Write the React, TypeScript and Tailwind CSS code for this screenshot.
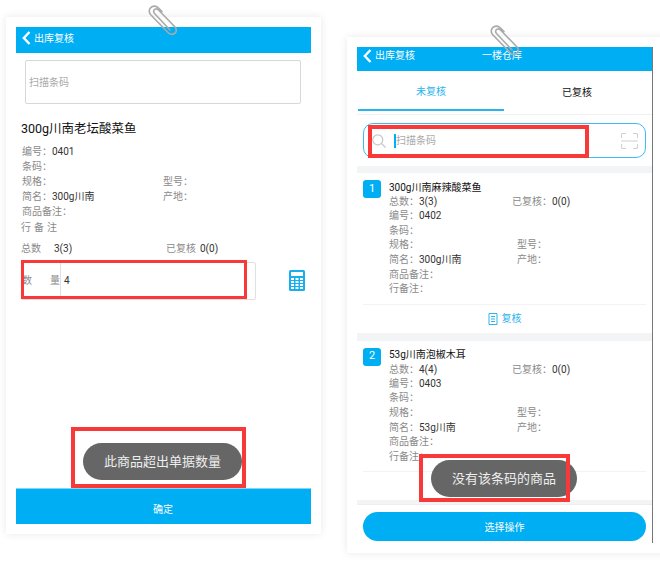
import React from "react";

const font = { fontFamily: '"Roboto","Noto Sans CJK SC",sans-serif' };

function Clip({ className }: { className: string }) {
  return (
    <svg className={`absolute ${className}`} width="30" height="30" viewBox="0 0 30 30" fill="none" stroke="#aaaaaa" strokeWidth="1.600" strokeLinecap="round">
      <path d="M22 25 L6.500 8.500 C5 7 5.500 4.500 7.500 4 C9 3.500 10 4.500 11 5.500 L27 22 C29 24.500 28.500 27 26.500 28.500 C24 30 21.500 29 20 27.500 L2.500 9.500 C0.500 7 1 3.500 3.500 2 C6 .500 8.500 1 10.500 3 L14 6.500" />
    </svg>
  );
}

function Chevron() {
  return (
    <svg width="9" height="14" viewBox="0 0 9 14" fill="none" stroke="white" strokeWidth="2.4">
      <path d="M7.500 1 L1.800 7 L7.500 13" />
    </svg>
  );
}

function Calculator() {
  return (
    <svg width="16" height="21" viewBox="0 0 16 21">
      <rect width="16" height="21" rx="1.500" fill="#19aef0" />
      <rect x="2" y="2" width="12" height="4" fill="white" />
      {[8, 11, 14, 17].map((y) =>
        [2, 6.500, 11].map((x) => <rect key={`${x}-${y}`} x={x} y={y} width="3" height="2" fill="white" />)
      )}
    </svg>
  );
}

function Row({ items, wide }: { items: [string, string?][]; wide?: boolean }) {
  return (
    <div className={`flex items-center text-[10px] leading-none ${wide ? "h-[14.800px]" : "h-[14.600px]"}`}>
      {items.map(([k, v], i) => (
        <div key={k} className={i === 0 ? (wide ? "w-[141px] shrink-0" : "w-[128px] shrink-0") : ""}>
          <span className="text-[#8a8a8a]">{k}</span>
          {v ? <span className="text-[#333]">{v}</span> : null}
        </div>
      ))}
    </div>
  );
}

function Item({ n, name, total, code, short }: { n: string; name: string; total: string; code: string; short: string }) {
  return (
    <div className="bg-white">
      <div className="flex px-[6px] pt-[7px]">
        <div className="flex h-[18px] w-[18px] shrink-0 items-center justify-center rounded-[3px] bg-[#00aef3] text-[11px] text-white">{n}</div>
        <div className="ml-2 flex-1">
          <div className="flex h-[15px] items-center text-[10px] leading-none text-[#111]">{name}</div>
          <div className="flex h-[14px] items-center text-[10px] leading-none">
            <div className="w-[123px] shrink-0">
              <span className="text-[#8a8a8a]">总数：</span>
              <span className="text-[#333]">{total}</span>
            </div>
            <span className="text-[#8a8a8a]">已复核：</span>
            <span className="text-[#333]">0(0)</span>
          </div>
          <Row items={[["编号：", code]]} />
          <Row items={[["条码："]]} />
          <Row items={[["规格："], ["型号："]]} />
          <Row items={[["简名：", short], ["产地："]]} />
          <Row items={[["商品备注："]]} />
          <Row items={[["行备注："]]} />
        </div>
      </div>
      <div className="mx-[6px] mt-[7px] flex h-[29px] items-center justify-center gap-1 border-t border-[#f3f3f3] text-[10px] text-[#2bb3ee]">
        <svg width="10" height="12" viewBox="0 0 10 12" fill="none" stroke="#2bb3ee">
          <path d="M1 .500 H9 V11.500 H1 Z M3 3.500 H7 M3 6 H7 M3 8.500 H7" />
        </svg>
        <span>复核</span>
      </div>
    </div>
  );
}

export default function App() {
  return (
    <div className="relative h-[567px] w-[660px] overflow-hidden bg-white" style={font}>
      <div className="flex items-start">
        {/* left phone */}
        <div className="ml-[6px] mt-[17px] w-[315px] shrink-0 bg-white px-[10px] pb-[10px] pt-[10px] shadow-[0_0_8px_rgba(0,0,0,0.09)]">
          <div className="flex h-[26px] items-center gap-[3px] bg-[#00aef3] pb-[4px] pl-[6px] text-[10px] text-white">
            <Chevron />
            <span>出库复核</span>
          </div>
          <div className="mx-[9px] mt-[7px] flex h-[44px] w-[276px] items-center rounded-[2px] border border-[#d8d8d8] pl-[3px] text-[10px] text-[#aaa]">扫描条码</div>
          <div className="ml-[5px] mt-[16px] text-[12.500px] leading-[18px] text-[#111]">300g川南老坛酸菜鱼</div>
          <div className="ml-[6px] mt-[7px]">
            <Row wide items={[["编号：", "0401"]]} />
            <Row wide items={[["条码："]]} />
            <Row wide items={[["规格："], ["型号："]]} />
            <Row wide items={[["简名：", "300g川南"], ["产地："]]} />
            <Row wide items={[["商品备注："]]} />
          </div>
          <div className="ml-[5px] mt-[1px] flex h-[16px] items-center text-[10px] tracking-[3px] text-[#8a8a8a]">行备注</div>
          <div className="ml-[5px] mt-[5px] flex h-[16px] items-center text-[10px] leading-none">
            <div className="flex w-[145px] shrink-0">
              <span className="w-[33px] text-[#8a8a8a]">总数</span>
              <span className="text-[#333]">3(3)</span>
            </div>
            <span className="text-[#8a8a8a]">已复核</span>
            <span className="ml-1 text-[#333]">0(0)</span>
          </div>
          <div className="ml-[5px] mt-[5px] flex items-center">
            <div className="flex h-[38px] w-[235px] items-center rounded-[2px] border border-[#e0e0e0] text-[10px]">
              <div className="flex h-full w-[39px] items-center justify-between border-r border-[#e0e0e0] text-[#8a8a8a]">
                <span>数</span>
                <span>量</span>
              </div>
              <span className="ml-[3px] text-[#333]">4</span>
            </div>
            <div className="ml-[33px]">
              <Calculator />
            </div>
          </div>
          <div className="mt-[188px] flex h-[36px] items-center justify-center border-t border-[#7fd6f9] bg-[#00aef3] pr-[1px] pt-[6px] text-[10px] text-white">确定</div>
        </div>

        {/* right phone */}
        <div className="ml-[26px] mt-[37px] w-[330px] shrink-0 bg-white pb-[10px] pl-[10px] pt-[10px] shadow-[0_0_8px_rgba(0,0,0,0.09)]">
          <div className="w-[296px] border-r border-[#777]">
            <div className="flex h-[24px] items-start gap-[3px] bg-[#00aef3] pl-[6px] pt-[2px] text-[10px] leading-[14px] text-white">
              <Chevron />
              <span>出库复核</span>
              <span className="ml-[64px]">一楼仓库</span>
            </div>
            <div className="flex h-[44px] border-b border-[#f0f0f0] pb-[3px] text-[10px]">
              <div className="ml-[1px] flex w-[146px] items-center justify-center border-b-2 border-[#2bb3ee] pt-[2px] text-[#2bb3ee]">未复核</div>
              <div className="flex flex-1 items-center justify-center pr-[2px] pt-[2px] text-[#111]">已复核</div>
            </div>
            <div className="px-[6px] py-[8px]">
              <div className="flex h-[35px] items-center rounded-[10px] border border-[#3dbcf0] pl-[8px] pr-[7px] text-[10px] text-[#aaa]">
                <svg width="14" height="14" viewBox="0 0 14 14" fill="none" stroke="#c8c8c8" strokeWidth="1.200">
                  <circle cx="5.800" cy="5.800" r="5" />
                  <path d="M9.500 9.500 L13.500 13.500" />
                </svg>
                <span className="ml-[8px] h-[14px] w-[2px] bg-[#00aef3]" />
                <span className="flex-1">扫描条码</span>
                <svg width="17" height="16" viewBox="0 0 17 16" fill="none" stroke="#d0d0d0" strokeWidth="1.100">
                  <path d="M.500 5 V2 Q.500 .500 2 .500 H5 M12 .500 H15 Q16.500 .500 16.500 2 V5 M0 8 H17 M.500 11 V14 Q.500 15.500 2 15.500 H5 M12 15.500 H15 Q16.500 15.500 16.500 14 V11" />
                </svg>
              </div>
            </div>
            <div className="h-[7px] bg-[#f3f4f6]" />
            <Item n="1" name="300g川南麻辣酸菜鱼" total="3(3)" code="0402" short="300g川南" />
            <div className="h-[8px] bg-[#f3f4f6]" />
            <Item n="2" name="53g川南泡椒木耳" total="4(4)" code="0403" short="53g川南" />
            <div className="h-[4px] bg-[#f3f4f6]" />
            <div className="border-t border-[#eee] px-[6px] pb-[2px] pt-[7px]">
              <div className="flex h-[29px] items-center justify-center rounded-full bg-[#00aef3] pt-[1px] text-[10px] text-white">选择操作</div>
            </div>
          </div>
        </div>
      </div>

      <Clip className="left-[148px] top-[5px]" />
      <Clip className="left-[490px] top-[25px]" />

      {/* toasts */}
      <div className="absolute left-[83px] top-[443px] flex h-[37px] w-[159px] items-center justify-center rounded-full bg-[#666] text-[13px] text-[#eee]">此商品超出单据数量</div>
      <div className="absolute left-[431px] top-[460px] flex h-[37px] w-[146px] items-center justify-center rounded-full bg-[#666] text-[13px] text-[#eee]">没有该条码的商品</div>

      {/* red annotation boxes */}
      <div className="absolute left-[21px] top-[260px] h-[39px] w-[226px] border-[3px] border-[#f93838]" />
      <div className="absolute left-[71px] top-[427px] h-[61px] w-[175px] border-[4px] border-[#f93838]" />
      <div className="absolute left-[368px] top-[125px] h-[33px] w-[221px] border-[4px] border-[#f93838]" />
      <div className="absolute left-[419px] top-[454px] h-[48px] w-[151px] border-[4px] border-[#f93838]" />
    </div>
  );
}
